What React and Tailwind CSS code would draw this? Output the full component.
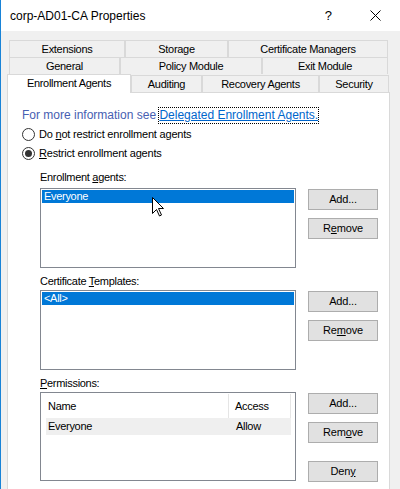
const dlg = { fontFamily: '"Liberation Sans", Arial, sans-serif' };

const Tab = ({ label, w, active }) => (
    <div
        className={`flex items-center justify-center border-t border-l border-r border-[#d9d9d9] text-[11px] tracking-[-0.3px] text-black ${active ? "bg-white h-[18px]" : "bg-[#f0f0f0] h-[17px]"}`}
        style={{ width: w }}
    >
        {label}
    </div>
);

const Btn = ({ children }) => (
    <div className="w-[70px] h-[21px] flex items-center justify-center bg-[#e1e1e1] border border-[#adadad] text-[11px] tracking-[-0.2px] text-black">
        {children}
    </div>
);

const Radio = ({ checked, children }) => (
    <div className="flex items-center h-[15px] gap-[4px]">
        <div className="w-[13px] h-[13px] rounded-full border border-[#333] bg-white flex items-center justify-center">
            {checked && <div className="w-[7px] h-[7px] rounded-full bg-[#333]" />}
        </div>
        <span className="text-[11px] tracking-[-0.2px] text-black leading-[15px]">{children}</span>
    </div>
);

const Label = ({ children }) => (
    <div className="h-[14px] text-[11px] tracking-[-0.3px] leading-[14px] text-black">{children}</div>
);

const ListBox = ({ item, h }) => (
    <div className="w-[256px] border border-[#828790] bg-white p-[1px]" style={{ height: h }}>
        <div className="h-[13px] bg-[#0078d7] text-white text-[11px] tracking-[-0.3px] leading-[13px] pl-[2px]">{item}</div>
    </div>
);

export default function App() {
    return (
        <div className="w-[400px] h-[489px] overflow-hidden bg-[#f0f0f0] border-l border-[#1883d7] relative" style={dlg}>
            {/* title bar */}
            <div className="h-[31px] bg-white flex items-center pl-[9px]">
                <span className="text-[12px] text-black">corp-AD01-CA Properties</span>
                <span className="ml-auto mr-[38px] text-[13px] text-black">?</span>
                <svg width="11" height="11" viewBox="0 0 11 11" className="mr-[19px]">
                    <path d="M0.5 0.5 L10.5 10.5 M10.5 0.5 L0.5 10.5" stroke="#000" strokeWidth="1" />
                </svg>
            </div>

            {/* tabs */}
            <div className="pl-[6px] pt-[9px]">
                <div className="flex ml-[2px]">
                    <Tab label="Extensions" w={116} />
                    <Tab label="Storage" w={103} />
                    <Tab label="Certificate Managers" w={160} />
                </div>
                <div className="flex ml-[2px]">
                    <Tab label="General" w={111} />
                    <Tab label="Policy Module" w={142} />
                    <Tab label="Exit Module" w={126} />
                </div>
                <div className="flex items-end">
                    <div className="relative z-10 -mb-px">
                        <div className="flex items-center justify-center w-[124px] h-[19px] bg-white border-t border-l border-r border-[#d9d9d9] text-[11px] tracking-[-0.3px] pb-[2px]">
                            Enrollment Agents
                        </div>
                    </div>
                    <Tab label="Auditing" w={71} />
                    <Tab label="Recovery Agents" w={117} />
                    <Tab label="Security" w={70} />
                </div>

                {/* panel */}
                <div className="w-[383px] h-[420px] bg-white border border-[#d9d9d9] pl-[14px] pt-[15px]">
                    <div className="h-[15px] leading-[15px] text-[12px] text-[#4760b2] flex">
                        <span>For more information see&nbsp;</span>
                        <span className="text-[#0066cc] underline outline outline-1 outline-dotted outline-black">
                            Delegated Enrollment Agents.
                        </span>
                    </div>
                    <div className="mt-[4px]">
                        <Radio>Do <u>n</u>ot restrict enrollment agents</Radio>
                    </div>
                    <div className="mt-[4px]">
                        <Radio checked><u>R</u>estrict enrollment agents</Radio>
                    </div>

                    <div className="ml-[18px] mt-[9px]">
                        <Label>Enrollment <u>a</u>gents:</Label>
                        <div className="flex mt-[4px]">
                            <ListBox item="Everyone" h={80} />
                            <div className="ml-[12px] flex flex-col gap-[8px] pt-[1px]">
                                <Btn>Add...</Btn>
                                <Btn>R<u>e</u>move</Btn>
                            </div>
                        </div>

                        <div className="mt-[6px]">
                            <Label>Certificate <u>T</u>emplates:</Label>
                        </div>
                        <div className="flex mt-[2px]">
                            <ListBox item="<All>" h={80} />
                            <div className="ml-[12px] flex flex-col gap-[8px] pt-[1px]">
                                <Btn>Add...</Btn>
                                <Btn>Re<u>m</u>ove</Btn>
                            </div>
                        </div>

                        <div className="mt-[6px]">
                            <Label><u>P</u>ermissions:</Label>
                        </div>
                        <div className="flex mt-[2px]">
                            <div className="w-[256px] h-[89px] border border-[#828790] bg-white pl-[5px] pt-[1px]">
                                <div className="flex h-[24px] items-center text-[11px] tracking-[-0.3px]">
                                    <div className="w-[183px] h-full flex items-center pl-[2px] border-r border-[#e5e5e5]">Name</div>
                                    <div className="w-[62px] h-full flex items-center pl-[6px] border-r border-[#e5e5e5]">Access</div>
                                </div>
                                <div className="flex h-[17px] items-center w-[245px] bg-[#efefef] text-[11px] tracking-[-0.3px]">
                                    <div className="w-[184px] pl-[2px]">Everyone</div>
                                    <div className="pl-[6px]">Allow</div>
                                </div>
                            </div>
                            <div className="ml-[12px] flex flex-col pt-[1px]">
                                <Btn>Add...</Btn>
                                <div className="mt-[8px]"><Btn>Rem<u>o</u>ve</Btn></div>
                                <div className="mt-[18px]"><Btn>Den<u>y</u></Btn></div>
                            </div>
                        </div>
                    </div>
                </div>
            </div>

            {/* mouse cursor */}
            <svg width="13" height="20" viewBox="0 0 13 20" className="absolute left-[151px] top-[197px]">
                <path d="M0.5 0.5 L0.5 16.5 L4.5 12.5 L7.5 19 L9.5 18 L6.5 11.5 L11.5 11.5 Z" fill="#fff" stroke="#000" strokeWidth="1" strokeLinejoin="miter" />
            </svg>
        </div>
    );
}
